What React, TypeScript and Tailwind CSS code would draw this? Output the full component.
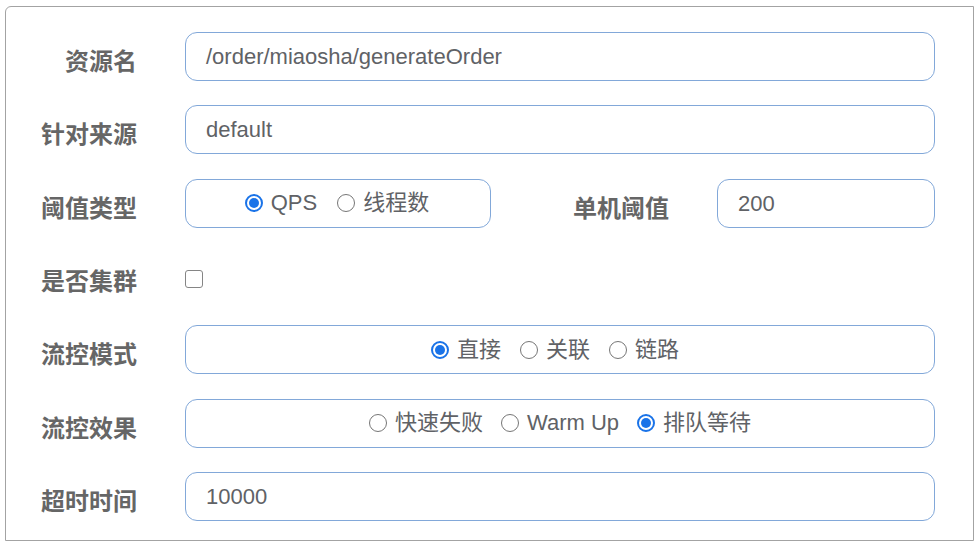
const cjk = '"Noto Sans CJK SC", sans-serif';
const latin = '"Liberation Sans", "Noto Sans CJK SC", sans-serif';

const Label = ({ children }: { children: React.ReactNode }) => (
  <div
    className="w-[131px] shrink-0 text-right text-[24px] font-bold text-[#666666] pt-[7px] mr-[48px] leading-none"
    style={{ fontFamily: cjk }}
  >
    {children}
  </div>
);

const Box = ({ children, className = "" }: { children?: React.ReactNode; className?: string }) => (
  <div
    className={`h-[49px] border border-[#82a8d9] rounded-[12px] flex items-center text-[22px] text-[#606266] ${className}`}
    style={{ fontFamily: latin }}
  >
    {children}
  </div>
);

const Radio = ({ checked, label }: { checked?: boolean; label: string }) => (
  <span className="flex items-center">
    <span
      className={`w-[18px] h-[18px] rounded-full flex items-center justify-center mr-[8px] ${
        checked ? "border-[2px] border-[#1a73e8]" : "border-[1.5px] border-[#767676]"
      }`}
    >
      {checked && <span className="w-[10px] h-[10px] rounded-full bg-[#1a73e8]" />}
    </span>
    <span className="leading-none">{label}</span>
  </span>
);

const Row = ({ children }: { children: React.ReactNode }) => (
  <div className="flex items-center h-[49px]">{children}</div>
);

export default function App() {
  return (
    <div className="w-[980px] h-[547px] bg-white pt-[6px] pl-[5px]">
      <div className="w-[969px] h-[535px] border border-[#a3a3a3] rounded-tl-[6px] pt-[25px] pr-[38px] flex flex-col gap-[24.33px]">
        <Row>
          <Label>资源名</Label>
          <Box className="flex-1 pl-[20px]">/order/miaosha/generateOrder</Box>
        </Row>
        <Row>
          <Label>针对来源</Label>
          <Box className="flex-1 pl-[20px]">default</Box>
        </Row>
        <Row>
          <Label>阈值类型</Label>
          <Box className="w-[306px] justify-center gap-[20px] pr-[2px]">
            <Radio checked label="QPS" />
            <Radio label="线程数" />
          </Box>
          <div
            className="flex-1 text-right text-[24px] font-bold text-[#666666] pt-[7px] pr-[48px] leading-none"
            style={{ fontFamily: cjk }}
          >
            单机阈值
          </div>
          <Box className="w-[218px] pl-[20px]">200</Box>
        </Row>
        <Row>
          <Label>是否集群</Label>
          <span className="w-[18px] h-[18px] mt-[6px] border-[1.5px] border-[#858585] rounded-[3px]" />
        </Row>
        <Row>
          <Label>流控模式</Label>
          <Box className="flex-1 justify-center gap-[19px] pr-[10px]">
            <Radio checked label="直接" />
            <Radio label="关联" />
            <Radio label="链路" />
          </Box>
        </Row>
        <Row>
          <Label>流控效果</Label>
          <Box className="flex-1 justify-center gap-[18px]">
            <Radio label="快速失败" />
            <Radio label="Warm Up" />
            <Radio checked label="排队等待" />
          </Box>
        </Row>
        <Row>
          <Label>超时时间</Label>
          <Box className="flex-1 pl-[20px]">10000</Box>
        </Row>
      </div>
    </div>
  );
}
